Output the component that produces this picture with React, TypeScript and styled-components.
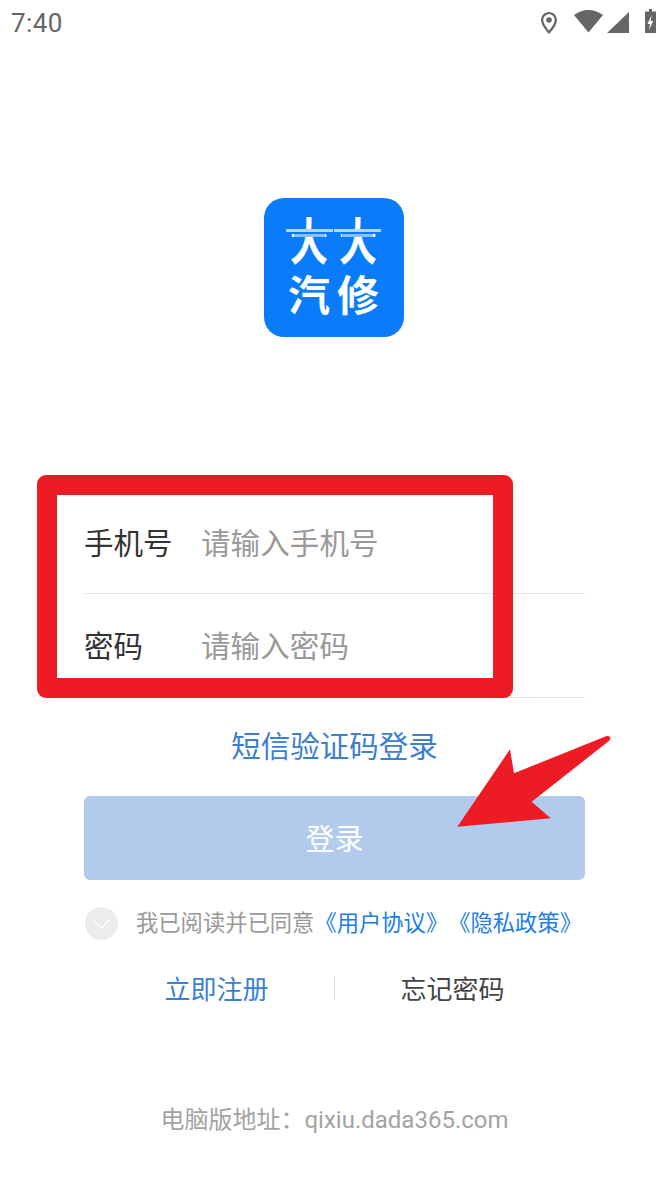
import styled, { createGlobalStyle } from "styled-components";

const GlobalStyle = createGlobalStyle`
  html, body {
    margin: 0;
    padding: 0;
    background: #fff;
  }
  * {
    box-sizing: border-box;
  }
`;

const Page = styled.div`
  position: relative;
  width: 669px;
  height: 1190px;
  overflow: hidden;
  background: #fff;
  font-family: "Noto Sans CJK SC", "Noto Sans", sans-serif;
  text-spacing-trim: space-all;
`;

const StatusBar = styled.div`
  height: 46px;
  padding: 0 9px 0 11px;
  display: flex;
  align-items: center;
  justify-content: space-between;
  color: #666;
`;

const Time = styled.span`
  font-family: Roboto, sans-serif;
  font-size: 26px;
  line-height: 46px;
  letter-spacing: 0.4px;
`;

const StatusIcons = styled.svg`
  display: block;
  width: 119px;
  height: 32px;
  fill: #666;
`;

const LogoWrap = styled.div`
  margin-top: 152px;
  display: flex;
  justify-content: center;
`;

const Logo = styled.svg`
  display: block;
  width: 140px;
  height: 139px;
  margin-left: -1px;

  text {
    font-family: "Noto Sans CJK SC", sans-serif;
    font-weight: 700;
    fill: #fff;
    text-anchor: middle;
  }
`;

const Form = styled.div`
  margin: 153px 84px 0;
`;

const Row = styled.div<{ $last?: boolean }>`
  height: 104px;
  display: flex;
  align-items: center;
  border-bottom: 1px solid #e3e3e3;
  padding-bottom: ${(props) => (props.$last ? "4px" : "2px")};
  font-size: 29.5px;
`;

const Label = styled.span`
  width: 117px;
  flex: none;
  color: #333;
`;

const Placeholder = styled.span`
  color: #999;
  letter-spacing: 0.1px;
`;

const SmsLink = styled.div`
  margin-top: 23px;
  height: 46px;
  line-height: 46px;
  text-align: center;
  color: #3a7fd0;
  font-size: 29.5px;
`;

const LoginButton = styled.button`
  display: block;
  width: 501px;
  height: 84px;
  margin: 29px 84px 0;
  padding: 0 0 2px;
  border: 0;
  border-radius: 6px;
  background: #b2cbed;
  color: #fff;
  font-family: inherit;
  font-size: 29px;
`;

const Agreement = styled.div`
  margin: 26px 0 0 85px;
  display: flex;
  align-items: center;
  height: 34px;
  font-size: 22.3px;
  color: #999;
`;

const CheckCircle = styled.span`
  width: 33px;
  height: 33px;
  margin-right: 18px;
  border-radius: 50%;
  background: #ececec;
  display: flex;
  align-items: center;
  justify-content: center;
`;

const AgreementText = styled.span`
  padding-bottom: 4px;
`;

const PolicyLink = styled.span`
  color: #1c7ee8;
`;

const Links = styled.div`
  margin-top: 35px;
  height: 26px;
  display: flex;
  align-items: center;
  justify-content: center;
  font-size: 26px;
  line-height: 26px;
`;

const LinkCell = styled.span<{ $accent?: boolean }>`
  width: 235px;
  text-align: center;
  color: ${(props) => (props.$accent ? "#3a7fd0" : "#444")};
`;

const Divider = styled.span`
  width: 1px;
  height: 24px;
  background: #d8d8d8;
`;

const Footer = styled.div`
  margin-top: 102px;
  text-align: center;
  font-family: Roboto, "Noto Sans CJK SC", sans-serif;
  font-size: 24px;
  line-height: 34px;
  color: #a3a3a3;
`;

const RedBox = styled.div`
  position: absolute;
  left: 37px;
  top: 475px;
  width: 476px;
  height: 223px;
  border: 20px solid #ed1c24;
  border-radius: 9px;
`;

const Arrow = styled.svg`
  position: absolute;
  left: 450px;
  top: 730px;
  width: 170px;
  height: 105px;
`;

export default function App() {
  return (
    <>
      <GlobalStyle />
      <Page>
        <StatusBar>
          <Time>7:40</Time>
          <StatusIcons viewBox="0 0 119 32">
            <path
              fillRule="evenodd"
              d="M8 5C3.600 5 0 8.600 0 13c0 5.800 8 14 8 14s8-8.200 8-14c0-4.400-3.600-8-8-8zm0 2.300c3.200 0 5.700 2.500 5.700 5.700 0 3.300-3.300 7.800-5.700 10.500-2.400-2.700-5.700-7.200-5.700-10.500C2.300 9.800 4.800 7.300 8 7.300z"
            />
            <circle cx="8" cy="13" r="2.800" />
            <path d="M33 8C37 5 42 3 47.500 3S58 5 62 8L47.500 25.500z" />
            <path d="M88 5v21H66z" />
            <path
              fillRule="evenodd"
              d="M108 2h3v2.500h4V26h-11V4.500h4zM110.500 8l-4 9h2.500l-1 6 4.300-9h-2.600z"
            />
          </StatusIcons>
        </StatusBar>

        <LogoWrap>
          <Logo viewBox="0 0 140 139">
            <rect width="140" height="139" rx="20" fill="#0a7cfa" />
            <text transform="translate(45 62) scale(0.8 1.05)" fontSize="48">大</text>
            <text transform="translate(94 62) scale(0.8 1.05)" fontSize="48">大</text>
            {/* road stripes sit where the bar of each character would be */}
            <rect x="22" y="26" width="16" height="5" fill="#0a7cfa" />
            <rect x="52" y="26" width="35" height="5" fill="#0a7cfa" />
            <rect x="101" y="26" width="16" height="5" fill="#0a7cfa" />
            <rect x="22" y="31" width="47" height="3" fill="#b5d6fb" />
            <rect x="70" y="31" width="47" height="3" fill="#b5d6fb" />
            <rect x="22" y="34" width="95" height="2" fill="#0a7cfa" />
            <rect x="30" y="36" width="31" height="3" fill="#8cc0fb" />
            <rect x="78" y="36" width="31" height="3" fill="#8cc0fb" />
            <text x="45" y="113" fontSize="42">汽</text>
            <text x="94" y="113" fontSize="42">修</text>
          </Logo>
        </LogoWrap>

        <Form>
          <Row>
            <Label>手机号</Label>
            <Placeholder>请输入手机号</Placeholder>
          </Row>
          <Row $last>
            <Label>密码</Label>
            <Placeholder>请输入密码</Placeholder>
          </Row>
        </Form>

        <SmsLink>短信验证码登录</SmsLink>
        <LoginButton>登录</LoginButton>

        <Agreement>
          <CheckCircle>
            <svg width="18" height="12" viewBox="0 0 18 12" fill="none" stroke="#fff" strokeWidth="1.500">
              <path d="M1 4l8 7 8-9" />
            </svg>
          </CheckCircle>
          <AgreementText>
            我已阅读并已同意
            <PolicyLink>《用户协议》《隐私政策》</PolicyLink>
          </AgreementText>
        </Agreement>

        <Links>
          <LinkCell $accent>立即注册</LinkCell>
          <Divider />
          <LinkCell>忘记密码</LinkCell>
        </Links>

        <Footer>电脑版地址：qixiu.dada365.com</Footer>

        <RedBox />
        <Arrow viewBox="450 730 170 105">
          <path
            d="M457.300 826.700L510 749.300L514 773.300L606 736.200C609 735 612 737.500 609.500 740.500L531.700 801.700L550.700 818.300Z"
            fill="#ed1c24"
          />
        </Arrow>
      </Page>
    </>
  );
}
